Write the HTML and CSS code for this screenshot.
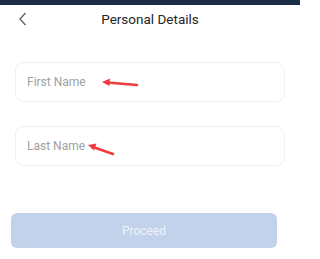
FILE: index.html
```
<!DOCTYPE html>
<html>
<head>
<meta charset="utf-8">
<link rel="stylesheet" href="styles.css">
</head>
<body>
<div class="status"></div>
<header class="header">
  <span class="back">
    <svg width="10" height="14" viewBox="0 0 10 14"><path d="M7.5 1 L2 7 L7.5 13" fill="none" stroke="#666" stroke-width="1.4"/></svg>
  </span>
  <h1 class="title">Personal Details</h1>
</header>
<main class="form">
  <div class="field">
    <input class="input" type="text" placeholder="First Name">
    <svg class="arrow arrow-1" width="40" height="10" viewBox="0 0 40 10"><path d="M36 7 L6 4.5" stroke="#f03a3e" stroke-width="2.4" stroke-linecap="round"/><path d="M1 4 L9 0.5 L8.5 8 Z" fill="#f03a3e"/></svg>
  </div>
  <div class="field">
    <input class="input" type="text" placeholder="Last Name">
    <svg class="arrow arrow-2" width="30" height="14" viewBox="0 0 30 14"><path d="M26 11 L6 4" stroke="#f03a3e" stroke-width="2.4" stroke-linecap="round"/><path d="M1 2 L9.5 0.5 L7 7.5 Z" fill="#f03a3e"/></svg>
  </div>
  <button class="btn" type="button">Proceed</button>
</main>
</body>
</html>
```
FILE: styles.css
```
* { box-sizing: border-box; }
html, body { overflow: hidden; }
body {
  margin: 0;
  background: #fff;
  font-family: Roboto, "Liberation Sans", sans-serif;
  width: 300px;
  height: 259px;
}
.status {
  height: 5px;
  background: #1b2c45;
}
.header {
  position: relative;
  height: 28px;
  display: flex;
  align-items: center;
  justify-content: center;
}
.back {
  position: absolute;
  left: 18px;
  top: 7px;
  display: flex;
}
.title {
  margin: 0;
  font-size: 13.5px;
  font-weight: 400;
  color: #262626;
}
.form {
  display: flex;
  flex-direction: column;
  padding: 29px 15px 0 15px;
}
.field {
  position: relative;
  margin-bottom: 24px;
}
.field + .field { margin-bottom: 47px; }
.input {
  display: block;
  width: 270px;
  height: 40px;
  border: 1px solid #eef0f3;
  border-radius: 9px;
  padding: 0 11px;
  font-family: inherit;
  font-size: 12px;
  color: #333;
  outline: none;
}
.input::placeholder { color: #a0a0a0; }
.arrow {
  position: absolute;
}
.arrow-1 { left: 86px; top: 16px; }
.arrow-2 { left: 72px; top: 17px; }
.btn {
  margin-left: -4px;
  width: 266px;
  height: 35px;
  border: none;
  border-radius: 6px;
  background: #c2d2ea;
  color: #eef2f9;
  font-family: inherit;
  font-size: 12px;
}
```
